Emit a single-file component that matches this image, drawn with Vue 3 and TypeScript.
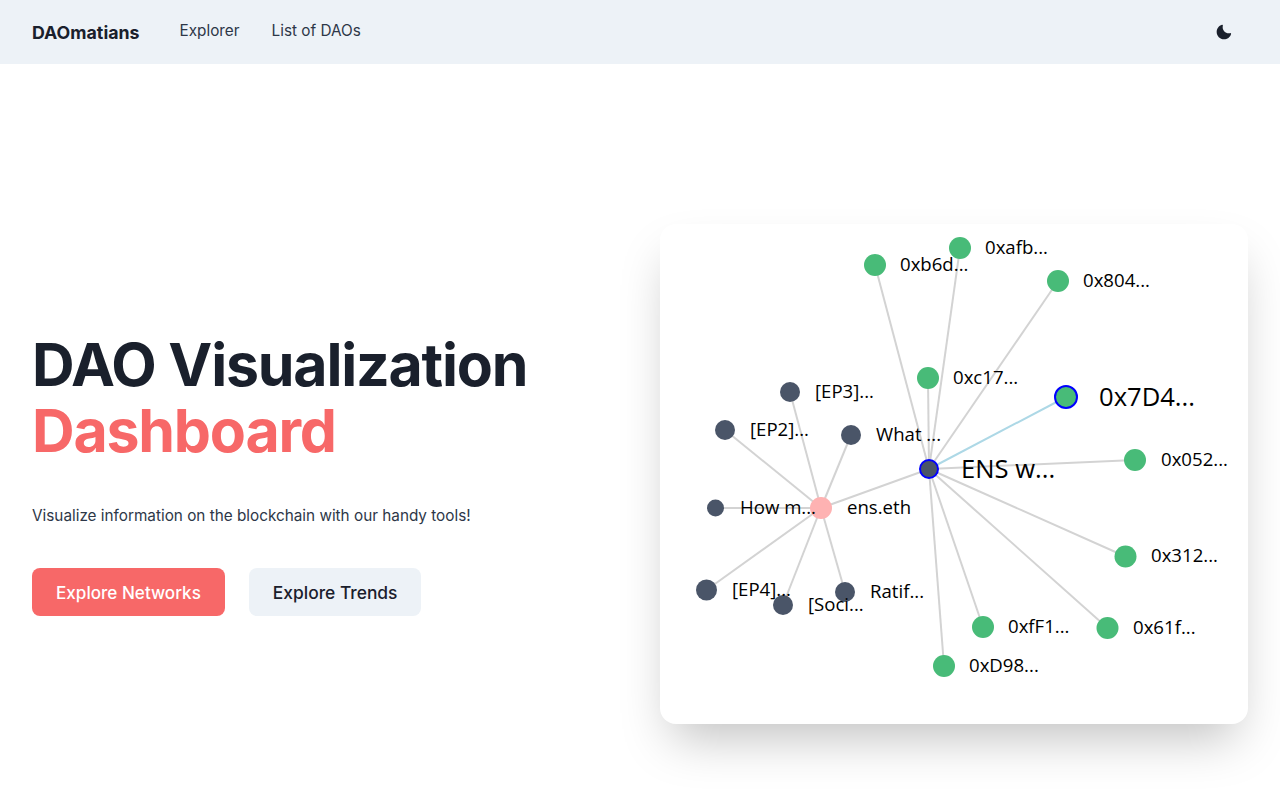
<script setup lang="ts">
interface GraphNode {
  x: number
  y: number
  r: number
  label: string
  labelX: number
  size: number
  fill: string
  ring?: boolean
}

const GREEN = '#48bb78'
const SLATE = '#4a5568'
const SMALL = 18.6
const LARGE = 25.6

const hub: GraphNode = { x: 269, y: 245, r: 9, label: 'ENS w...', labelX: 301, size: LARGE, fill: SLATE, ring: true }
const dao: GraphNode = { x: 161, y: 284, r: 11, label: 'ens.eth', labelX: 187, size: SMALL, fill: '#feb2b2' }

const voters: GraphNode[] = [
  { x: 215, y: 41, r: 11, label: '0xb6d...', labelX: 240, size: SMALL, fill: GREEN },
  { x: 300, y: 24, r: 11, label: '0xafb...', labelX: 325, size: SMALL, fill: GREEN },
  { x: 398, y: 57, r: 11, label: '0x804...', labelX: 423, size: SMALL, fill: GREEN },
  { x: 268, y: 154, r: 11, label: '0xc17...', labelX: 293, size: SMALL, fill: GREEN },
  { x: 406, y: 173, r: 11, label: '0x7D4...', labelX: 439, size: LARGE, fill: GREEN, ring: true },
  { x: 475, y: 236, r: 11, label: '0x052...', labelX: 501, size: SMALL, fill: GREEN },
  { x: 465.5, y: 332.5, r: 11, label: '0x312...', labelX: 491, size: SMALL, fill: GREEN },
  { x: 447.5, y: 404, r: 11, label: '0x61f...', labelX: 473, size: SMALL, fill: GREEN },
  { x: 323, y: 403, r: 11, label: '0xfF1...', labelX: 348, size: SMALL, fill: GREEN },
  { x: 284, y: 442, r: 11, label: '0xD98...', labelX: 309, size: SMALL, fill: GREEN },
]

const proposals: GraphNode[] = [
  { x: 130, y: 168, r: 10, label: '[EP3]...', labelX: 155, size: SMALL, fill: SLATE },
  { x: 65, y: 206, r: 10, label: '[EP2]...', labelX: 90, size: SMALL, fill: SLATE },
  { x: 191, y: 211, r: 10, label: 'What ...', labelX: 216, size: SMALL, fill: SLATE },
  { x: 55.5, y: 284, r: 8.5, label: 'How m...', labelX: 80, size: SMALL, fill: SLATE },
  { x: 46.5, y: 366, r: 10.5, label: '[EP4]...', labelX: 72, size: SMALL, fill: SLATE },
  { x: 123, y: 381, r: 10, label: '[Soci...', labelX: 148, size: SMALL, fill: SLATE },
  { x: 185, y: 368, r: 10, label: 'Ratif...', labelX: 210, size: SMALL, fill: SLATE },
]

const nodes = [...proposals, ...voters, dao, hub]
</script>

<template>
  <div class="page">
    <nav class="navbar">
      <div class="brand">DAOmatians</div>
      <div class="links">
        <a class="link">Explorer</a>
        <a class="link">List of DAOs</a>
      </div>
      <button class="theme-btn" aria-label="Toggle theme">
        <svg viewBox="0 0 24 24" width="16" height="16">
          <path
            fill="currentColor"
            d="M21.4,13.7C20.6,13.9,19.8,14,19,14c-5,0-9-4-9-9c0-0.8,0.1-1.6,0.3-2.4c0.1-0.3,0-0.7-0.3-1c-0.3-0.3-0.6-0.4-1-0.3C4.3,2.7,1,7.1,1,12c0,6.1,4.9,11,11,11c4.9,0,9.3-3.3,10.6-8.1c0.1-0.3,0-0.7-0.3-1C22.1,13.7,21.7,13.6,21.4,13.7z"
          />
        </svg>
      </button>
    </nav>

    <main class="hero">
      <section class="intro">
        <h1 class="title">
          DAO Visualization<br />
          <span class="accent">Dashboard</span>
        </h1>
        <p class="lead">Visualize information on the blockchain with our handy tools!</p>
        <div class="actions">
          <button class="btn primary">Explore Networks</button>
          <button class="btn secondary">Explore Trends</button>
        </div>
      </section>

      <section class="card">
        <svg class="graph" viewBox="0 0 588 500" width="588" height="500">
          <line v-for="n in proposals" :key="n.label" :x1="dao.x" :y1="dao.y" :x2="n.x" :y2="n.y" class="edge" />
          <line :x1="dao.x" :y1="dao.y" :x2="hub.x" :y2="hub.y" class="edge" />
          <line
            v-for="n in voters"
            :key="n.label"
            :x1="hub.x"
            :y1="hub.y"
            :x2="n.x"
            :y2="n.y"
            class="edge"
            :class="{ active: n.ring }"
          />
          <circle
            v-for="n in nodes"
            :key="n.label"
            :cx="n.x"
            :cy="n.y"
            :r="n.r"
            :fill="n.fill"
            :class="{ ring: n.ring }"
          />
          <text
            v-for="n in nodes"
            :key="n.label"
            :x="n.labelX"
            :y="n.y + (n.size === LARGE ? 2 : 1)"
            :font-size="n.size"
            class="label"
          >{{ n.label }}</text>
        </svg>
      </section>
    </main>
  </div>
</template>

<style>
body {
  background: #fff;
}
</style>

<style scoped>
.page {
  font-family: Inter, "Liberation Sans", sans-serif;
  color: #1a202c;
  height: 800px;
  overflow: hidden;
}

.navbar {
  display: flex;
  align-items: center;
  height: 64px;
  padding: 0 32px;
  background: #edf2f7;
}

.brand {
  font-size: 17.8px;
  font-weight: 700;
  margin-right: 40px;
}

.links {
  display: flex;
  gap: 32px;
  flex: 1;
  margin-top: -4px;
}

.link {
  font-size: 15.3px;
  color: #2d3748;
}

.theme-btn {
  display: flex;
  align-items: center;
  justify-content: center;
  width: 48px;
  height: 48px;
  border: 0;
  background: transparent;
  color: #1a202c;
}

.hero {
  display: flex;
  align-items: center;
  justify-content: space-between;
  padding: 160px 32px 0;
}

.title {
  margin: 0;
  font-size: 59px;
  line-height: 66px;
  font-weight: 700;
  letter-spacing: -1.2px;
}

.accent {
  color: #f76868;
}

.lead {
  margin: 40px 0 0;
  font-size: 15.3px;
  line-height: 24px;
  color: #2d3748;
}

.actions {
  display: flex;
  gap: 24px;
  margin-top: 40px;
}

.btn {
  height: 48px;
  padding: 0 24px;
  border: 0;
  border-radius: 8px;
  font-family: inherit;
  font-size: 17.1px;
  font-weight: 500;
}

.primary {
  background: #f76868;
  color: #fff;
}

.secondary {
  background: #edf2f7;
  color: #1a202c;
  font-size: 17.4px;
}

.card {
  width: 588px;
  height: 500px;
  border-radius: 16px;
  background: #fff;
  box-shadow: 0 25px 50px -12px rgba(0, 0, 0, 0.25);
}

.graph {
  display: block;
}

.edge {
  stroke: #d3d3d3;
  stroke-width: 2;
}

.edge.active {
  stroke: #add8e6;
}

.ring {
  stroke: #0000ff;
  stroke-width: 2;
}

.label {
  font-family: "Open Sans", sans-serif;
  fill: #000;
  dominant-baseline: middle;
}
</style>
